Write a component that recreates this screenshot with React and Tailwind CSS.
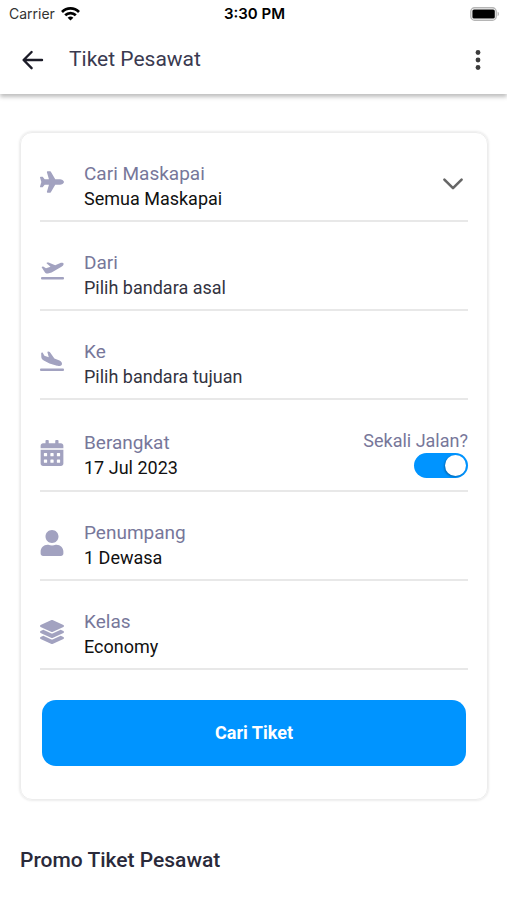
import { useState } from "react";
import { FaPlane, FaCalendarAlt, FaUser, FaLayerGroup } from "react-icons/fa";

const TakeoffIcon = ({ className }) => (
  <svg viewBox="0 0 24 24" className={className} fill="currentColor">
    <path d="M1.6 8.2c.3-.8 1.4-1 2-.5L6 9.3l4.5-1.6-3.7-3.1c-.4-.4-.2-.9.3-1l1.5-.2 6.6 2.8 4.6-2c1.7-.7 3.6-.6 3.8.6.2 1.4-1.2 2.7-3 3.5l-9 5.3-3.6.8c-1.6.3-2.2-.1-3-1z" />
    <rect x="1" y="18" width="23" height="2.4" rx="1" />
  </svg>
);

const LandingIcon = ({ className }) => (
  <svg viewBox="0 0 24 24" className={className} fill="currentColor">
    <path d="M1.2 3c0-.5.9-.8 1.4-.5l1.8 3.3 4.4 1.4-1.4-5c-.1-.5.4-.8.9-.7l1.5.5 4.6 6.4 5.1 2.2c1.8.8 2.9 2.4 2.4 3.8-.5 1.4-2.9 1.8-4.9 1.4l-7.5-2.4-5.7-2.9C2.2 9.6 1.4 8.6 1.3 7z" />
    <rect x="0" y="18.6" width="24" height="2.4" rx="1" />
  </svg>
);

const StatusBar = () => (
  <div className="grid grid-cols-3 items-center h-7 pl-[9px] pr-[7px] font-['Inter',sans-serif] text-black">
    <div className="flex items-center gap-1.5 text-sm">
      <span className="text-[#333]">Carrier</span>
      <svg viewBox="0 0 19 14" className="w-[19px] h-[14px]" fill="none" stroke="#000" strokeWidth="2.7">
        <path d="M1 5a12 12 0 0 1 17 0" />
        <path d="M4.2 8.3a7.5 7.5 0 0 1 10.6 0" />
        <path d="M9.5 13.6 6.6 10.8a4.2 4.2 0 0 1 5.8 0z" fill="#000" stroke="none" />
      </svg>
    </div>
    <span className="text-center text-[15px] font-semibold">3:30 PM</span>
    <svg viewBox="0 0 30 14" className="w-[30px] h-[14px] justify-self-end">
      <rect x="0.8" y="0.8" width="25.4" height="12.4" rx="3.8" fill="#fff" stroke="#b5b5b5" strokeWidth="1.4" />
      <rect x="2.4" y="2.4" width="22.4" height="9.2" rx="1.6" fill="#000" />
      <path d="M27.6 4.8c1.8.6 1.8 3.8 0 4.4z" fill="#b5b5b5" />
    </svg>
  </div>
);

const Header = () => (
  <header className="bg-white shadow-[0_3px_4px_rgba(0,0,0,0.25)]">
    <StatusBar />
    <div className="flex items-center h-[66px] pl-[21px] pr-4 pb-[3px]">
      <button type="button" aria-label="Kembali" className="cursor-pointer">
        <svg viewBox="0 0 24 24" className="w-6 h-6" fill="none" stroke="#1c1c28" strokeWidth="2.4" strokeLinecap="round" strokeLinejoin="round">
          <path d="M10.6 4 2.6 12l8 8.2M3 12h18" />
        </svg>
      </button>
      <h1 className="flex-1 ml-6 text-[21px] text-[#3a3a50]">Tiket Pesawat</h1>
      <button type="button" aria-label="Menu" className="cursor-pointer">
        <svg viewBox="0 0 26 24" className="w-[26px] h-6" fill="#3c3c3c">
          <circle cx="13" cy="4.5" r="2.4" />
          <circle cx="13" cy="12" r="2.4" />
          <circle cx="13" cy="19.5" r="2.4" />
        </svg>
      </button>
    </div>
  </header>
);

const Field = ({ id, icon: Icon, label, iconClass, children, extra }) => (
  <div className="flex items-center pt-7 pb-[9px] border-b-2 border-[#e8e8e8]">
    <div className="w-6 mr-5 flex justify-center shrink-0 text-[#a2a2c0]">
      <Icon className={iconClass} />
    </div>
    <div className="flex-1 min-w-0">
      <label htmlFor={id} className="block text-[19px] leading-[25px] text-[#77779a]">
        {label}
      </label>
      {children}
    </div>
    {extra}
  </div>
);

const valueClass =
  "block w-full text-left text-lg leading-[25px] text-[#111] bg-transparent outline-none appearance-none cursor-pointer";
const inputClass =
  "block w-full h-[25px] text-lg leading-[25px] text-[#111] placeholder:text-[#33333f] bg-transparent outline-none";

const App = () => {
  const [maskapai, setMaskapai] = useState("semua");
  const [asal, setAsal] = useState("");
  const [tujuan, setTujuan] = useState("");
  const [sekaliJalan, setSekaliJalan] = useState(true);

  return (
    <div className="min-h-screen bg-white font-['Roboto',sans-serif]">
      <Header />
      <main className="pl-5 pr-[19px] pt-[38px]">
        <form
          onSubmit={(e) => e.preventDefault()}
          className="px-[19px] pb-[33px] border border-[#ededed] rounded-xl shadow-[0_0_3px_rgba(0,0,0,0.16)]"
        >
          <Field
            id="maskapai"
            icon={FaPlane}
            label="Cari Maskapai"
            iconClass="w-6 h-6 mb-2"
            extra={
              <svg viewBox="0 0 22 14" className="w-[22px] h-[14px] mr-1 mb-1 shrink-0 pointer-events-none" fill="none" stroke="#666" strokeWidth="2.6" strokeLinecap="round" strokeLinejoin="round">
                <path d="M2.4 2.6 11 11.2l8.6-8.6" />
              </svg>
            }
          >
            <select
              id="maskapai"
              value={maskapai}
              onChange={(e) => setMaskapai(e.target.value)}
              className={valueClass}
            >
              <option value="semua">Semua Maskapai</option>
            </select>
          </Field>

          <Field id="asal" icon={TakeoffIcon} label="Dari" iconClass="w-6 h-6 mb-2">
            <input
              id="asal"
              type="text"
              value={asal}
              onChange={(e) => setAsal(e.target.value)}
              placeholder="Pilih bandara asal"
              className={inputClass}
            />
          </Field>

          <Field id="tujuan" icon={LandingIcon} label="Ke" iconClass="w-6 h-6 mb-1">
            <input
              id="tujuan"
              type="text"
              value={tujuan}
              onChange={(e) => setTujuan(e.target.value)}
              placeholder="Pilih bandara tujuan"
              className={inputClass}
            />
          </Field>

          <Field
            id="berangkat"
            icon={FaCalendarAlt}
            label="Berangkat"
            iconClass="w-6 h-[26px] mb-1"
            extra={
              <label className="flex flex-col items-end shrink-0 pb-[3px] cursor-pointer">
                <span className="text-lg leading-[25px] text-[#77779a]">Sekali Jalan?</span>
                <input
                  type="checkbox"
                  role="switch"
                  checked={sekaliJalan}
                  onChange={(e) => setSekaliJalan(e.target.checked)}
                  className="peer sr-only"
                />
                <span className="flex items-center justify-start peer-checked:justify-end w-[54px] h-[25px] px-0.5 rounded-full bg-gray-300 peer-checked:bg-[#0094ff]">
                  <span className="w-[21px] h-[21px] rounded-full bg-white shadow-[-1px_1px_2px_rgba(0,0,0,0.3)]" />
                </span>
              </label>
            }
          >
            <button id="berangkat" type="button" className={valueClass}>
              17 Jul 2023
            </button>
          </Field>

          <Field id="penumpang" icon={FaUser} label="Penumpang" iconClass="w-6 h-[26px] mb-1">
            <button id="penumpang" type="button" className={valueClass}>
              1 Dewasa
            </button>
          </Field>

          <Field id="kelas" icon={FaLayerGroup} label="Kelas" iconClass="w-6 h-6 mb-1">
            <button id="kelas" type="button" className={valueClass}>
              Economy
            </button>
          </Field>

          <div className="px-0.5 pt-[30px]">
            <button
              type="submit"
              className="w-full h-[66px] rounded-[14px] bg-[#0094ff] text-lg font-bold text-white cursor-pointer"
            >
              Cari Tiket
            </button>
          </div>
        </form>

        <h2 className="mt-[45px] text-[21px] font-medium text-[#2a2a3a]">Promo Tiket Pesawat</h2>
      </main>
    </div>
  );
};

export default App;
